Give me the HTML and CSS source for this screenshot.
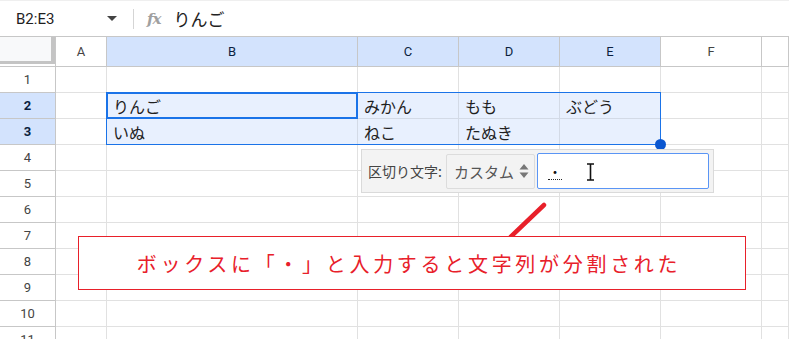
FILE: index.html
```html
<!DOCTYPE html>
<html lang="ja">
<head>
    <meta charset="UTF-8">
    <title>Sheet</title>
    <link rel="stylesheet" href="styles.css">
</head>
<body>

    <div class="formula-bar">
        <div class="name-box">B2:E3</div>
        <svg class="caret" width="10" height="5" viewBox="0 0 10 5"><path d="M0 0 L10 0 L5 5 Z" fill="#444"/></svg>
        <div class="sep"></div>
        <span class="fx">fx</span>
        <span class="formula">りんご</span>
    </div>

    <div class="sheet">
        <div class="row head">
            <div class="cell rh corner"><div class="corner-box"></div></div>
            <div class="cell ca">A</div>
            <div class="cell cb on">B</div>
            <div class="cell cc on">C</div>
            <div class="cell cd on">D</div>
            <div class="cell ce on">E</div>
            <div class="cell cf">F</div>
            <div class="cell cg"></div>
        </div>
        <div class="row">
            <div class="cell rh">1</div>
            <div class="cell ca"></div><div class="cell cb"></div><div class="cell cc"></div>
            <div class="cell cd"></div><div class="cell ce"></div><div class="cell cf"></div><div class="cell cg"></div>
        </div>
        <div class="row">
            <div class="cell rh on">2</div>
            <div class="cell ca"></div>
            <div class="cell cb sel">りんご</div>
            <div class="cell cc sel">みかん</div>
            <div class="cell cd sel">もも</div>
            <div class="cell ce sel">ぶどう</div>
            <div class="cell cf"></div><div class="cell cg"></div>
        </div>
        <div class="row">
            <div class="cell rh on">3</div>
            <div class="cell ca"></div>
            <div class="cell cb sel">いぬ</div>
            <div class="cell cc sel">ねこ</div>
            <div class="cell cd sel">たぬき</div>
            <div class="cell ce sel"></div>
            <div class="cell cf"></div><div class="cell cg"></div>
        </div>
        <div class="row">
            <div class="cell rh">4</div>
            <div class="cell ca"></div><div class="cell cb"></div><div class="cell cc"></div>
            <div class="cell cd"></div><div class="cell ce"></div><div class="cell cf"></div><div class="cell cg"></div>
        </div>
        <div class="row">
            <div class="cell rh">5</div>
            <div class="cell ca"></div><div class="cell cb"></div><div class="cell cc"></div>
            <div class="cell cd"></div><div class="cell ce"></div><div class="cell cf"></div><div class="cell cg"></div>
        </div>
        <div class="row">
            <div class="cell rh">6</div>
            <div class="cell ca"></div><div class="cell cb"></div><div class="cell cc"></div>
            <div class="cell cd"></div><div class="cell ce"></div><div class="cell cf"></div><div class="cell cg"></div>
        </div>
        <div class="row">
            <div class="cell rh">7</div>
            <div class="cell ca"></div><div class="cell cb"></div><div class="cell cc"></div>
            <div class="cell cd"></div><div class="cell ce"></div><div class="cell cf"></div><div class="cell cg"></div>
        </div>
        <div class="row">
            <div class="cell rh">8</div>
            <div class="cell ca"></div><div class="cell cb"></div><div class="cell cc"></div>
            <div class="cell cd"></div><div class="cell ce"></div><div class="cell cf"></div><div class="cell cg"></div>
        </div>
        <div class="row">
            <div class="cell rh">9</div>
            <div class="cell ca"></div><div class="cell cb"></div><div class="cell cc"></div>
            <div class="cell cd"></div><div class="cell ce"></div><div class="cell cf"></div><div class="cell cg"></div>
        </div>
        <div class="row">
            <div class="cell rh">10</div>
            <div class="cell ca"></div><div class="cell cb"></div><div class="cell cc"></div>
            <div class="cell cd"></div><div class="cell ce"></div><div class="cell cf"></div><div class="cell cg"></div>
        </div>
        <div class="row">
            <div class="cell rh">11</div>
            <div class="cell ca"></div><div class="cell cb"></div><div class="cell cc"></div>
            <div class="cell cd"></div><div class="cell ce"></div><div class="cell cf"></div><div class="cell cg"></div>
        </div>

        <!-- 選択範囲 -->
        <div class="selection"></div>
        <div class="active-cell"></div>
        <div class="handle"></div>

        <!-- 区切り文字ポップアップ -->
        <div class="split-popup">
            <span class="split-label">区切り文字:</span>
            <div class="split-select">
                <span>カスタム</span>
                <svg width="10" height="16" viewBox="0 0 10 16"><path d="M0.5 6.5 L5 1 L9.5 6.5 Z M0.5 9.5 L5 15 L9.5 9.5 Z" fill="#777"/></svg>
            </div>
            <div class="split-input">
                <span class="ime">・</span>
                <svg class="ibeam" width="9" height="18" viewBox="0 0 9 18"><path d="M1 1 H8 M4.5 1 V17 M1 17 H8" stroke="#111" stroke-width="1.6" fill="none"/></svg>
            </div>
        </div>

        <svg class="arrow" width="789" height="300" viewBox="0 0 789 300"><line x1="544" y1="168" x2="498" y2="212" stroke="#e8202a" stroke-width="4.5" stroke-linecap="round"/></svg>

        <div class="callout">ボックスに「・」と入力すると文字列が分割された</div>
    </div>

</body>
</html>
```

FILE: styles.css
```css
body {
    margin: 0;
    font-family: Roboto, Arial, "Noto Sans CJK JP", sans-serif;
    background: white;
    width: 789px;
    height: 339px;
    overflow: hidden;
}

.formula-bar {
    height: 37px;
    box-sizing: border-box;
    border-top: 1px solid #efefef;
    border-bottom: 1px solid #c7c7c7;
    display: flex;
    align-items: center;
}

.name-box {
    width: 91px;
    padding-left: 16px;
    font-size: 15px;
    color: #1f1f1f;
}

.caret {
    margin-right: 16px;
}

.sep {
    width: 1px;
    height: 20px;
    background: #d5d5d5;
    margin-right: 13px;
}

.fx {
    font-family: "DejaVu Serif", serif;
    font-style: italic;
    font-weight: bold;
    font-size: 15px;
    color: #a0a0a0;
    margin-right: 13px;
    letter-spacing: -1px;
}

.formula {
    font-family: "Noto Sans CJK JP", sans-serif;
    font-size: 17px;
    color: #222;
}

.sheet {
    position: relative;
}

.row {
    display: flex;
    height: 26px;
}

.row.head {
    height: 30px;
}

.cell {
    box-sizing: border-box;
    border-right: 1px solid #e1e1e1;
    border-bottom: 1px solid #e1e1e1;
    font-family: "Noto Sans CJK JP", sans-serif;
    font-size: 16px;
    color: #1f1f1f;
    padding-left: 6px;
    display: flex;
    align-items: center;
    white-space: nowrap;
}

.head .cell {
    border-right-color: #c7c7c7;
    border-bottom-color: #c7c7c7;
    font-family: Roboto, Arial, sans-serif;
    font-size: 13px;
    color: #444;
    justify-content: center;
    padding-left: 0;
}

.head .cell.on {
    background: #d3e3fd;
    color: #0b1f3f;
}

.rh {
    width: 56px;
    border-right-color: #c7c7c7;
    border-bottom-color: #c7c7c7;
    font-family: Roboto, Arial, sans-serif;
    font-size: 13px;
    color: #444;
    justify-content: center;
    padding-left: 0;
}

.rh.on {
    background: #d3e3fd;
    font-weight: bold;
    color: #0b1f3f;
}

.corner {
    align-items: flex-start;
    justify-content: flex-start;
}

.corner-box {
    width: 51px;
    height: 24px;
    background: #f8f9fa;
    border-right: 4px solid #c4c4c4;
    border-bottom: 3px solid #c4c4c4;
}

.ca { width: 51px; }
.cb { width: 251px; }
.cc, .cd, .ce, .cf { width: 101px; }
.cg { flex: 1; }

.sel {
    background: #e8f0fe;
    border-color: #d3dae6;
}

.selection {
    position: absolute;
    left: 106px;
    top: 55px;
    width: 555px;
    height: 53px;
    box-sizing: border-box;
    border: 1px solid #1a73e8;
}

.active-cell {
    position: absolute;
    left: 106px;
    top: 55px;
    width: 252px;
    height: 27px;
    box-sizing: border-box;
    border: 2px solid #1a73e8;
}

.handle {
    position: absolute;
    left: 655px;
    top: 102px;
    width: 11px;
    height: 11px;
    border-radius: 50%;
    background: #0b57d0;
}

.split-popup {
    position: absolute;
    left: 361px;
    top: 112px;
    width: 353px;
    height: 44px;
    box-sizing: border-box;
    background: #f3f3f3;
    border: 1px solid #dadada;
    display: flex;
    align-items: center;
    padding: 0 4px 0 6px;
}

.split-label {
    flex: 1;
    white-space: nowrap;
    font-family: "Noto Sans CJK JP", sans-serif;
    font-size: 14px;
    color: #444;
}

.split-select {
    flex-shrink: 0;
    width: 89px;
    height: 35px;
    box-sizing: border-box;
    border: 1px solid #dcdcdc;
    border-radius: 2px;
    background: #f3f3f3;
    display: flex;
    align-items: center;
    justify-content: space-between;
    padding: 0 5px 0 7px;
    font-family: "Noto Sans CJK JP", sans-serif;
    font-size: 15px;
    color: #555;
    white-space: nowrap;
    margin-right: 2px;
}

.split-input {
    flex-shrink: 0;
    width: 172px;
    height: 36px;
    box-sizing: border-box;
    background: white;
    border: 1px solid #5a95f5;
    border-radius: 2px;
    display: flex;
    align-items: center;
    padding-left: 10px;
}

.ime {
    font-family: "Noto Sans CJK JP", sans-serif;
    font-size: 14px;
    color: #111;
    border-bottom: 1px dotted #222;
    line-height: 16px;
    margin-right: 24px;
}

.ibeam {
    margin-top: 2px;
}

.arrow {
    position: absolute;
    left: 0;
    top: 0;
}

.callout {
    position: absolute;
    left: 78px;
    top: 199px;
    width: 668px;
    height: 54px;
    box-sizing: border-box;
    border: 1px solid #e8202a;
    background: white;
    display: flex;
    align-items: center;
    justify-content: center;
    font-family: "Noto Sans CJK JP", sans-serif;
    font-size: 20px;
    letter-spacing: 3.7px;
    color: #e8202a;
    padding-right: 6px;
}
```
